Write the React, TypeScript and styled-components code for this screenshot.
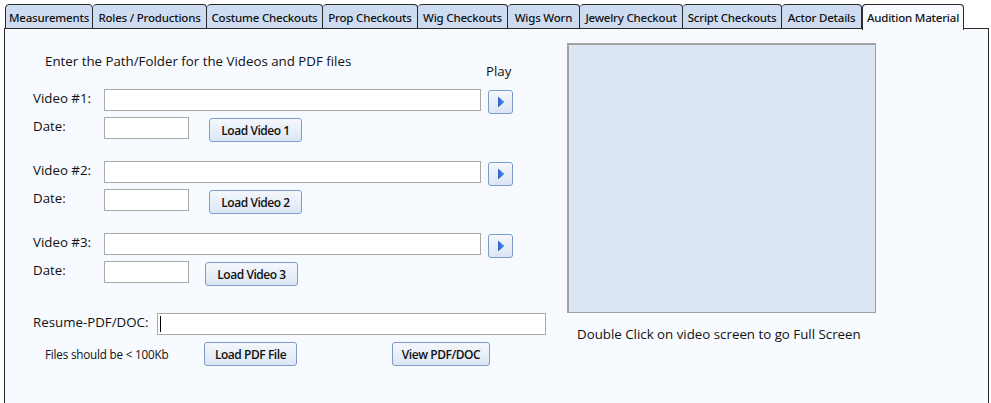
import styled, { createGlobalStyle } from 'styled-components';

const GlobalStyle = createGlobalStyle`
  html, body {
    margin: 0;
    padding: 0;
    background: #ffffff;
  }
  body {
    width: 991px;
    height: 403px;
    overflow: hidden;
    font-family: 'Open Sans', 'Noto Sans', sans-serif;
    color: #111;
  }
`;

const Page = styled.div`
  padding: 3px 0 0 4px;
  height: 400px;
  overflow: hidden;
`;

const TabBar = styled.div`
  display: flex;
  align-items: flex-end;
  height: 26px;
  padding-left: 1px;
  position: relative;
  z-index: 1;
`;

const Tab = styled.div<{ w: number; active?: boolean }>`
  box-sizing: border-box;
  width: ${p => p.w}px;
  height: ${p => (p.active ? 26 : 25)}px;
  margin-bottom: ${p => (p.active ? -1 : 0)}px;
  display: flex;
  align-items: center;
  justify-content: center;
  border: 1px solid #2a2a2a;
  border-bottom: ${p => (p.active ? 'none' : '1px solid #2a2a2a')};
  border-left-width: ${p => (p.active ? 1 : 0)}px;
  border-radius: 4px 4px 0 0;
  background: ${p => (p.active ? '#f7faff' : '#cddcf1')};
  font-family: 'Noto Sans', sans-serif;
  font-size: 11.5px;
  font-weight: 500;
  letter-spacing: -0.2px;
  white-space: nowrap;
  color: #111;
  padding-top: ${p => (p.active ? 0 : 1)}px;

  &:first-child {
    border-left-width: 1px;
  }
`;

const Panel = styled.div`
  box-sizing: border-box;
  width: 985px;
  height: 375px;
  margin-top: -1px;
  border: 1px solid #2a2a2a;
  border-bottom: none;
  background: #f7faff;
  display: flex;
`;

const FormColumn = styled.div`
  width: 534px;
  padding: 24px 0 0 28px;
  display: flex;
  flex-direction: column;
`;

const Intro = styled.div`
  margin-left: 12px;
  height: 16px;
  line-height: 16px;
  font-size: 13.3px;
  white-space: nowrap;
`;

const PlayLabel = styled.div`
  margin: -6px 0 0 453px;
  height: 16px;
  line-height: 16px;
  font-size: 13.3px;
`;

const Group = styled.div<{ $first?: boolean }>`
  display: flex;
  flex-direction: column;
  gap: 4px;
  margin-top: ${p => (p.$first ? 10 : 20)}px;
`;

const Row = styled.div`
  display: flex;
  align-items: flex-start;
  height: 24px;
`;

const Label = styled.div<{ w: number }>`
  width: ${p => p.w}px;
  height: 21px;
  line-height: 19px;
  font-size: 13.3px;
  white-space: nowrap;
`;

const TextBox = styled.div<{ w: number }>`
  box-sizing: border-box;
  width: ${p => p.w}px;
  height: 22px;
  background: #ffffff;
  border: 1px solid #a9a9a9;
  position: relative;
`;

const Caret = styled.div`
  position: absolute;
  left: 2px;
  top: 2px;
  width: 1px;
  height: 16px;
  background: #000;
`;

const Button = styled.button<{ w: number; ml?: number; mt?: number }>`
  box-sizing: border-box;
  width: ${p => p.w}px;
  height: 24px;
  margin-left: ${p => p.ml ?? 0}px;
  margin-top: ${p => p.mt ?? 1}px;
  padding: 0;
  border: 1px solid #7b9cc9;
  border-radius: 3px;
  background: linear-gradient(#f5f8fc, #dbe6f4);
  font-family: 'Open Sans', 'Noto Sans', sans-serif;
  font-size: 12px;
  font-weight: 600;
  letter-spacing: -0.45px;
  color: #111;
  display: flex;
  align-items: center;
  justify-content: center;
`;

const PlayButton = styled(Button)`
  width: 25px;
  margin-left: 7px;
`;

const Note = styled.div`
  width: 171px;
  padding-left: 12px;
  box-sizing: border-box;
  font-size: 11.7px;
  line-height: 22px;
  margin-top: 1px;
  white-space: nowrap;
  letter-spacing: -0.2px;
`;

const ResumeGroup = styled.div`
  display: flex;
  flex-direction: column;
  gap: 5px;
  margin-top: 28px;
`;

const VideoColumn = styled.div`
  padding-top: 14px;
  display: flex;
  flex-direction: column;
`;

const VideoScreen = styled.div`
  box-sizing: border-box;
  width: 309px;
  height: 270px;
  background: #dce6f2;
  border: 2px solid #a3a3a3;
  border-right-width: 1px;
  border-bottom-width: 1px;
`;

const Hint = styled.div`
  margin: 13px 0 0 10px;
  font-size: 13.3px;
  line-height: 16px;
  white-space: nowrap;
`;

const tabs: [string, number][] = [
  ['Measurements', 88],
  ['Roles / Productions', 114],
  ['Costume Checkouts', 116],
  ['Prop Checkouts', 95],
  ['Wig Checkouts', 90],
  ['Wigs Worn', 72],
  ['Jewelry Checkout', 103],
  ['Script Checkouts', 99],
  ['Actor Details', 80],
  ['Audition Material', 102],
];

const PlayIcon = () => (
  <svg width="8" height="12" viewBox="0 0 8 12">
    <defs>
      <linearGradient id="tri" x1="0" y1="0" x2="1" y2="0">
        <stop offset="0" stopColor="#2f5fc4" />
        <stop offset="1" stopColor="#5a8ee6" />
      </linearGradient>
    </defs>
    <path d="M1 0.5 L7.5 6 L1 11.5 Z" fill="url(#tri)" />
  </svg>
);

const VideoGroup = ({ n, first, btnGap }: { n: number; first?: boolean; btnGap: number }) => (
  <Group $first={first}>
    <Row>
      <Label w={71}>Video #{n}:</Label>
      <TextBox w={377} />
      <PlayButton w={25}>
        <PlayIcon />
      </PlayButton>
    </Row>
    <Row>
      <Label w={71}>Date:</Label>
      <TextBox w={85} />
      <Button w={93} ml={btnGap}>
        Load Video {n}
      </Button>
    </Row>
  </Group>
);

export default function App() {
  return (
    <Page>
      <GlobalStyle />
      <TabBar>
        {tabs.map(([name, w], i) => (
          <Tab key={name} w={w} active={i === tabs.length - 1}>
            {name}
          </Tab>
        ))}
      </TabBar>
      <Panel>
        <FormColumn>
          <Intro>Enter the Path/Folder for the Videos and PDF files</Intro>
          <PlayLabel>Play</PlayLabel>
          <VideoGroup n={1} first btnGap={20} />
          <VideoGroup n={2} btnGap={20} />
          <VideoGroup n={3} btnGap={16} />
          <ResumeGroup>
            <Row>
              <Label w={124}>Resume-PDF/DOC:</Label>
              <TextBox w={389}>
                <Caret />
              </TextBox>
            </Row>
            <Row>
              <Note>Files should be &lt; 100Kb</Note>
              <Button w={93} mt={0}>
                Load PDF File
              </Button>
              <Button w={98} ml={95} mt={0}>
                View PDF/DOC
              </Button>
            </Row>
          </ResumeGroup>
        </FormColumn>
        <VideoColumn>
          <VideoScreen />
          <Hint>Double Click on video screen to go Full Screen</Hint>
        </VideoColumn>
      </Panel>
    </Page>
  );
}
